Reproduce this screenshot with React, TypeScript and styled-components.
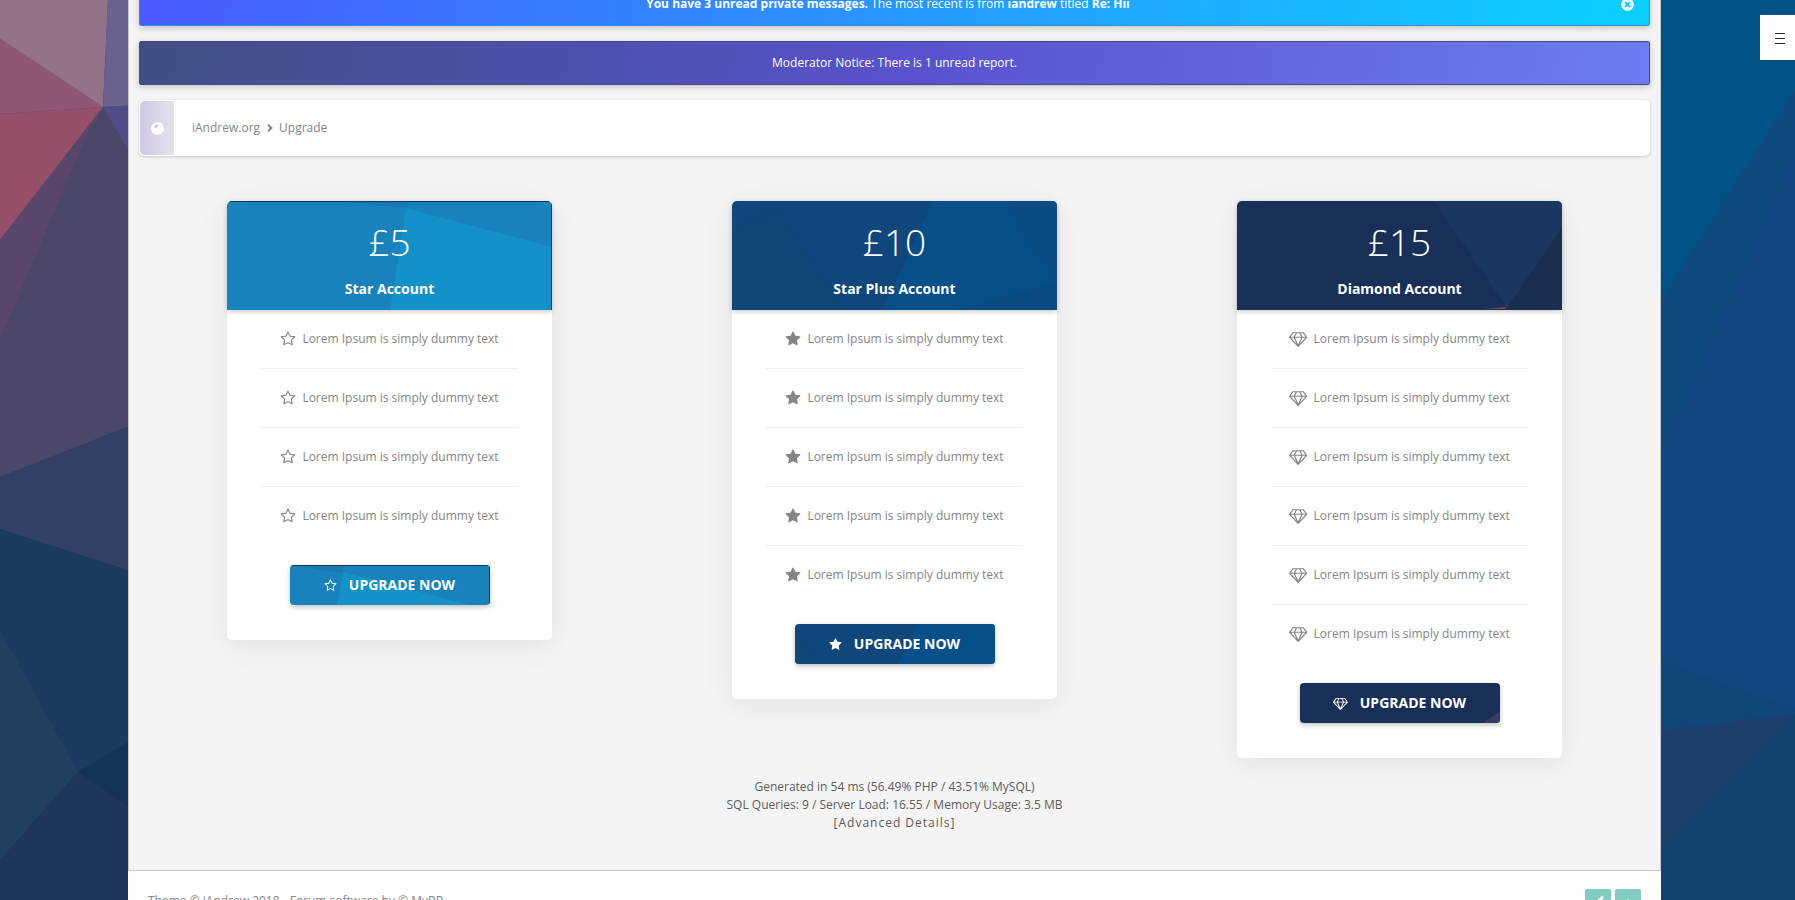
import React from "react";
import styled, { createGlobalStyle } from "styled-components";
import { FaTimesCircle } from "react-icons/fa";

type Tone = "sky" | "ocean" | "navy";

const GlobalStyle = createGlobalStyle`
  *, *::before, *::after { box-sizing: border-box; }
  body {
    margin: 0;
    background: #134782;
    color: #858585;
    font-family: "Open Sans", "Noto Sans", sans-serif;
    font-size: 12px;
    line-height: 18px;
  }
`;

const Viewport = styled.div`
  position: relative;
  height: 100vh;
  overflow: hidden;
`;

const Backdrop = styled.svg`
  position: absolute;
  inset: 0;
  width: 100%;
  height: 100%;
`;

const Page = styled.div`
  position: relative;
  margin: 0 134px 0 128px;
`;

const Content = styled.main`
  display: flex;
  flex-direction: column;
  gap: 15px;
  padding: 0 10px 38px;
  background: #f4f4f4;
  border: solid #c8c8c8;
  border-width: 0 1px 1px;
`;

const Alert = styled.div<{ $from: string; $mid: string; $to: string; $edge: string }>`
  display: flex;
  align-items: center;
  height: 44px;
  padding: 0 15px;
  color: #fff;
  background: linear-gradient(100deg, ${(p) => p.$from}, ${(p) => p.$mid} 50%, ${(p) => p.$to});
  border: 1px solid ${(p) => p.$edge};
  border-radius: 2px;
  box-shadow: 0 2px 6px rgba(0, 0, 0, 0.2);

  &:first-child {
    margin-top: -18px;
  }
`;

const AlertText = styled.p`
  flex: 1;
  margin: 0;
  text-align: center;
`;

const DismissButton = styled.button`
  display: flex;
  padding: 0;
  border: 0;
  background: none;
  color: #fff;
  font-size: 13px;
`;

const Breadcrumb = styled.nav`
  display: flex;
  align-items: center;
  height: 56px;
  padding: 1px;
  background: #fff;
  border-radius: 5px;
  box-shadow: 0 1px 3px rgba(0, 0, 0, 0.18);
`;

const BreadcrumbBadge = styled.span`
  display: flex;
  align-items: center;
  justify-content: center;
  align-self: stretch;
  width: 34px;
  margin-right: 18px;
  background: linear-gradient(90deg, #cfc8e0, #e6e1f0);
  border-radius: 5px 0 0 5px;
`;

const Crumbs = styled.ol`
  display: flex;
  align-items: center;
  gap: 6px;
  margin: 0;
  padding: 0;
  list-style: none;

  li {
    display: flex;
    align-items: center;
    gap: 7px;
  }
`;

const PlainLink = styled.a`
  color: inherit;
  text-decoration: none;
`;

const Plans = styled.section`
  display: flex;
  justify-content: space-around;
  align-items: flex-start;
  margin: 30px -2px 5px;
`;

const Card = styled.article`
  width: 325px;
  padding-bottom: 35px;
  background: #fff;
  border-radius: 5px;
  box-shadow: 0 5px 30px rgba(0, 0, 0, 0.08);
`;

const CardHeader = styled.header`
  position: relative;
  height: 109px;
  padding-top: 16px;
  overflow: hidden;
  color: #fff;
  text-align: center;
  border-radius: 5px 5px 0 0;
`;

const HeaderShade = styled.div`
  border-radius: 5px 5px 0 0;
  box-shadow: 0 2px 5px rgba(0, 0, 0, 0.2);
`;

const Facets = styled.svg`
  position: absolute;
  inset: 0;
  width: 100%;
  height: 100%;
`;

const Price = styled.p`
  position: relative;
  margin: 0 0 13px;
  font-size: 37px;
  font-weight: 300;
  line-height: 50px;
`;

const PlanName = styled.h2`
  position: relative;
  margin: 0;
  font-size: 14px;
  font-weight: 700;
  line-height: 18px;
`;

const Glyph = styled.svg<{ $size: number }>`
  flex: none;
  width: auto;
  height: ${(p) => p.$size}px;
`;

const Features = styled.ul`
  margin: 0 34px;
  padding: 0;
  list-style: none;
`;

const Feature = styled.li`
  display: flex;
  align-items: center;
  justify-content: center;
  gap: 6px;
  height: 59px;
  border-bottom: 1px solid #eee;

  &:last-child {
    border-bottom-color: transparent;
  }
`;

const UpgradeButton = styled.button`
  position: relative;
  display: flex;
  align-items: center;
  justify-content: center;
  width: 200px;
  height: 40px;
  margin: 19px auto 0;
  padding: 0;
  overflow: hidden;
  color: #fff;
  background: none;
  border: 0;
  border-radius: 4px;
  box-shadow: 0 2px 5px rgba(0, 0, 0, 0.25);
  font: inherit;
  font-size: 14px;
  font-weight: 700;
  text-transform: uppercase;
`;

const ButtonLabel = styled.span`
  position: relative;
  display: flex;
  align-items: center;
  gap: 12px;
`;

const Stats = styled.div`
  color: #5c5c5c;
  text-align: center;

  p {
    margin: 0;
  }
`;

const SpacedLink = styled(PlainLink)`
  letter-spacing: 1px;
`;

const Footer = styled.footer`
  display: flex;
  align-items: flex-start;
  justify-content: space-between;
  height: 60px;
  padding: 18px 20px 0;
  background: #fff;
`;

const FooterText = styled.p`
  margin: 3px 0 0;
`;

const FooterButtons = styled.div`
  display: flex;
  gap: 4px;
`;

const SquareButton = styled.button`
  width: 26px;
  height: 26px;
  padding: 6px;
  border: 0;
  border-radius: 2px;
  background: #82cdc2;

  svg {
    display: block;
  }
`;

const MenuButton = styled.button`
  position: absolute;
  top: 15px;
  right: 0;
  width: 35px;
  height: 45px;
  padding: 2px 0 0 5px;
  border: 0;
  background: #fff;

  svg {
    display: block;
    margin: 0 auto;
  }
`;

const backdropShapes: [string, string][] = [
  ["#494868", "0,0 140,0 140,422 0,477"],
  ["#94738a", "0,0 108,0 103,107 0,39"],
  ["#69618f", "108,0 140,0 140,105 103,107"],
  ["#8f5678", "0,39 103,107 0,114"],
  ["#964f6a", "0,114 103,107 0,240"],
  ["#5a466a", "0,240 103,107 88,132 0,340"],
  ["#4f4c86", "103,107 140,105 140,170"],
  ["#343f65", "0,477 140,422 140,574 0,529"],
  ["#1a3a60", "0,529 140,574 140,900 0,900"],
  ["#213f60", "0,630 78,772 0,860"],
  ["#143358", "78,772 140,735 140,814"],
  ["#1e355c", "78,772 140,814 140,900 0,900 0,860"],
  ["#134782", "1650,0 1795,0 1795,900 1650,900"],
  ["#005287", "1650,0 1795,0 1795,90 1650,318"],
  ["#0f4a7e", "1795,90 1650,318 1650,480 1795,150"],
  ["#11467a", "1650,656 1795,708 1795,716 1650,732"],
  ["#1d3f6c", "1650,732 1795,714 1650,858"],
  ["#14426f", "1795,714 1650,858 1650,900 1795,900"],
];

const headerShapes: Record<Tone, [string, string][]> = {
  sky: [
    ["#1782bb", "0,0 325,0 325,109 0,109"],
    ["#1591c9", "179,7 325,46 325,109 163,109"],
    ["#1a76b0", "110,0 182,0 180,7"],
    ["#12385a", "0,0 325,0 325,1 0,1"],
    ["#12385a", "324,0 325,0 325,109 324,109"],
  ],
  ocean: [
    ["#0f467b", "0,0 325,0 325,109 0,109"],
    ["#0f4878", "0,28 46,10 112,109 0,109"],
    ["#074f88", "201,0 325,0 325,109 150,109"],
    ["#0a4c84", "270,0 325,0 325,82"],
    ["#0b4b82", "325,82 325,109 225,109"],
  ],
  navy: [
    ["#182f57", "0,0 325,0 325,109 0,109"],
    ["#1b375f", "197,0 325,0 325,27 270,107"],
    ["#1a2e50", "325,27 325,109 270,109 270,107"],
    ["#6a4a5e", "245,108 270,106 268,108"],
  ],
};

const buttonShapes: Record<Tone, [string, string][]> = {
  sky: [
    ["#1782bb", "0,0 200,0 200,40 0,40"],
    ["#1a76b0", "0,0 54,0 52,8"],
    ["#1591c9", "53,7 180,40 47,40"],
    ["#12385a", "0,0 200,0 200,1 0,1"],
    ["#12385a", "199,0 200,0 200,40 199,40"],
  ],
  ocean: [
    ["#0f467b", "0,0 200,0 200,40 0,40"],
    ["#0f4878", "0,8 24,40 0,40"],
    ["#074f88", "122,0 200,0 200,40 103,40"],
  ],
  navy: [
    ["#182f57", "0,0 200,0 200,40 0,40"],
    ["#3a3a5c", "200,28 200,40 183,40"],
  ],
};

const glyphs = {
  starOutline: {
    box: "0 0 1792 1792",
    d: "M1201 1004l306-297-422-62-189-382-189 382-422 62 306 297-73 421 378-199 377 199zm527-357q0 22-26 48l-363 354 86 500q1 7 1 20 0 50-41 50-19 0-40-12l-449-236-449 236q-22 12-40 12-21 0-31.5-14.5t-10.5-35.5q0-6 2-20l86-500-364-354q-25-27-25-48 0-37 56-46l502-73 225-455q19-41 49-41t49 41l225 455 502 73q56 9 56 46z",
  },
  star: {
    box: "0 0 1792 1792",
    d: "M1728 647q0 22-26 48l-363 354 86 500q1 7 1 20 0 21-10.5 35.5t-30.5 14.5q-19 0-40-12l-449-236-449 236q-22 12-40 12-21 0-31.5-14.5t-10.5-35.5q0-6 2-20l86-500-364-354q-25-27-25-48 0-37 56-46l502-73 225-455q19-41 49-41t49 41l225 455 502 73q56 9 56 46z",
  },
  diamond: {
    box: "0 0 2048 1792",
    d: "M212 768l623 665-300-665h-323zM1024 1511l349-743h-698zM538 640l204-384h-262l-288 384h346zM1213 1433l623-665h-323zM683 640h682l-204-384h-274zM1510 640h346l-288-384h-262zM1651 153l384 512q14 18 13 41.5t-17 40.5l-960 1024q-18 20-47 20t-47-20l-960-1024q-16-17-17-40.5t13-41.5l384-512q18-25 51-25h1152q33 0 51 25z",
  },
};

type Plan = {
  tone: Tone;
  price: string;
  name: string;
  icon: keyof typeof glyphs;
  rows: number;
};

const plans: Plan[] = [
  { tone: "sky", price: "£5", name: "Star Account", icon: "starOutline", rows: 4 },
  { tone: "ocean", price: "£10", name: "Star Plus Account", icon: "star", rows: 5 },
  { tone: "navy", price: "£15", name: "Diamond Account", icon: "diamond", rows: 6 },
];

function Icon({ name, size }: { name: keyof typeof glyphs; size: number }) {
  return (
    <Glyph $size={size} viewBox={glyphs[name].box} fill="currentColor" aria-hidden="true">
      <path d={glyphs[name].d} />
    </Glyph>
  );
}

function Polygons({ shapes }: { shapes: [string, string][] }) {
  return (
    <>
      {shapes.map(([fill, points]) => (
        <polygon key={fill + points} fill={fill} points={points} />
      ))}
    </>
  );
}

function PlanCard({ tone, price, name, icon, rows }: Plan) {
  return (
    <Card>
      <HeaderShade>
        <CardHeader>
          <Facets viewBox="0 0 325 109" preserveAspectRatio="none" aria-hidden="true">
            <Polygons shapes={headerShapes[tone]} />
          </Facets>
          <Price>{price}</Price>
          <PlanName>{name}</PlanName>
        </CardHeader>
      </HeaderShade>
      <Features>
        {Array.from({ length: rows }, (_, i) => (
          <Feature key={i}>
            <Icon name={icon} size={16} />
            Lorem Ipsum is simply dummy text
          </Feature>
        ))}
      </Features>
      <UpgradeButton type="button">
        <Facets viewBox="0 0 200 40" preserveAspectRatio="none" aria-hidden="true">
          <Polygons shapes={buttonShapes[tone]} />
        </Facets>
        <ButtonLabel>
          <Icon name={icon} size={13} />
          Upgrade now
        </ButtonLabel>
      </UpgradeButton>
    </Card>
  );
}

export default function App() {
  return (
    <Viewport>
      <GlobalStyle />
      <Backdrop viewBox="0 0 1795 900" preserveAspectRatio="none" aria-hidden="true">
        <Polygons shapes={backdropShapes} />
      </Backdrop>
      <Page>
        <Content>
          <Alert $from="#4a5aff" $mid="#2897ff" $to="#0bd0ff" $edge="#2c8fe0">
            <AlertText>
              <strong>You have 3 unread private messages.</strong> The most recent is from{" "}
              <strong>iandrew</strong> titled <strong>Re: Hii</strong>
            </AlertText>
            <DismissButton type="button" aria-label="Dismiss">
              <FaTimesCircle />
            </DismissButton>
          </Alert>
          <Alert $from="#3f4f82" $mid="#5852cc" $to="#6e7cf0" $edge="#4a4790">
            <AlertText>Moderator Notice: There is 1 unread report.</AlertText>
          </Alert>
          <Breadcrumb aria-label="Breadcrumb">
            <BreadcrumbBadge>
              <svg width="13" height="13" viewBox="0 0 13 13" aria-hidden="true">
                <circle cx="6.5" cy="6.5" r="6.5" fill="#fff" />
                <path
                  d="M3 4.5L4.5 2.5L7 2.8L7.6 3.8L6.4 5.2L5 6.4L3.6 6Z M8.4 2.6L9.6 3.2L9 4Z"
                  fill="#d3cce3"
                />
              </svg>
            </BreadcrumbBadge>
            <Crumbs>
              <li>
                <PlainLink href="#home">iAndrew.org</PlainLink>
                <svg width="6" height="8" viewBox="0 0 6 8" aria-hidden="true">
                  <path d="M1 .8L4.4 4L1 7.2" fill="none" stroke="currentColor" strokeWidth="2" />
                </svg>
              </li>
              <li>Upgrade</li>
            </Crumbs>
          </Breadcrumb>
          <Plans>
            {plans.map((plan) => (
              <PlanCard key={plan.name} {...plan} />
            ))}
          </Plans>
          <Stats>
            <p>Generated in 54 ms (56.49% PHP / 43.51% MySQL)</p>
            <p>SQL Queries: 9 / Server Load: 16.55 / Memory Usage: 3.5 MB</p>
            <p>
              <SpacedLink href="#details">[Advanced Details]</SpacedLink>
            </p>
          </Stats>
        </Content>
        <Footer>
          <FooterText>Theme © iAndrew 2018 - Forum software by © MyBB</FooterText>
          <FooterButtons>
            <SquareButton type="button" aria-label="Edit">
              <svg width="14" height="14" viewBox="0 0 14 14" fill="#fff">
                <path d="M2 12l3-6 6-5 2 1-2 3-6 7z" />
              </svg>
            </SquareButton>
            <SquareButton type="button" aria-label="Back to top">
              <svg width="14" height="14" viewBox="0 0 14 14" fill="#fff">
                <path d="M7 4l6 6-2 2-4-4-4 4-2-2z" />
              </svg>
            </SquareButton>
          </FooterButtons>
        </Footer>
      </Page>
      <MenuButton type="button" aria-label="Open menu">
        <svg width="10" height="11" viewBox="0 0 10 11" stroke="#222" strokeWidth="1">
          <path d="M0 .5h10M0 5.5h10M0 10.5h10" />
        </svg>
      </MenuButton>
    </Viewport>
  );
}
